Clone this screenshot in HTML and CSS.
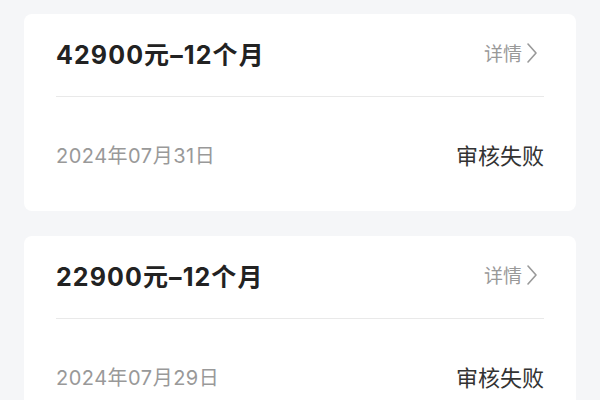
FILE: index.html
```html
<!DOCTYPE html>
<html lang="zh-CN">
<head>
<meta charset="utf-8">
<link rel="stylesheet" href="styles.css">
</head>
<body>
<div class="list">
  <div class="card">
    <div class="card-head">
      <div class="title">42900元–12个月</div>
      <div class="detail">详情<svg class="chev" width="12" height="22" viewBox="0 0 12 22"><path d="M2 2 L10 11 L2 20" fill="none" stroke="#999" stroke-width="1.6" stroke-linecap="round" stroke-linejoin="round"/></svg></div>
    </div>
    <div class="card-body">
      <div class="date">2024年07月31日</div>
      <div class="status">审核失败</div>
    </div>
  </div>
  <div class="card">
    <div class="card-head">
      <div class="title">22900元–12个月</div>
      <div class="detail">详情<svg class="chev" width="12" height="22" viewBox="0 0 12 22"><path d="M2 2 L10 11 L2 20" fill="none" stroke="#999" stroke-width="1.6" stroke-linecap="round" stroke-linejoin="round"/></svg></div>
    </div>
    <div class="card-body">
      <div class="date">2024年07月29日</div>
      <div class="status">审核失败</div>
    </div>
  </div>
</div>
</body>
</html>
```
FILE: styles.css
```css
html, body {
  margin: 0;
  padding: 0;
  background: #f5f6f8;
  font-family: Inter, "Noto Sans CJK SC", sans-serif;
}
.list {
  padding: 14px 24px 0;
  display: flex;
  flex-direction: column;
  gap: 25px;
}
.card {
  background: #fff;
  border-radius: 8px;
  padding: 0 32px;
}
.card-head {
  height: 83px;
  display: flex;
  align-items: center;
  justify-content: space-between;
  border-bottom: 1.5px solid #e9e9e9;
  padding-bottom: 5px;
  box-sizing: border-box;
}
.title {
  font-size: 25px;
  font-weight: 700;
  color: #222;
  letter-spacing: 1.1px;
}
.detail {
  display: flex;
  align-items: center;
  gap: 4px;
  font-size: 19px;
  color: #999;
  padding-right: 6px;
}
.chev {
  display: block;
}
.card-body {
  height: 114px;
  display: flex;
  align-items: center;
  justify-content: space-between;
  box-sizing: border-box;
}
.date {
  font-size: 20px;
  color: #999;
  letter-spacing: 0.5px;
}
.status {
  font-size: 22px;
  color: #333;
}
```
